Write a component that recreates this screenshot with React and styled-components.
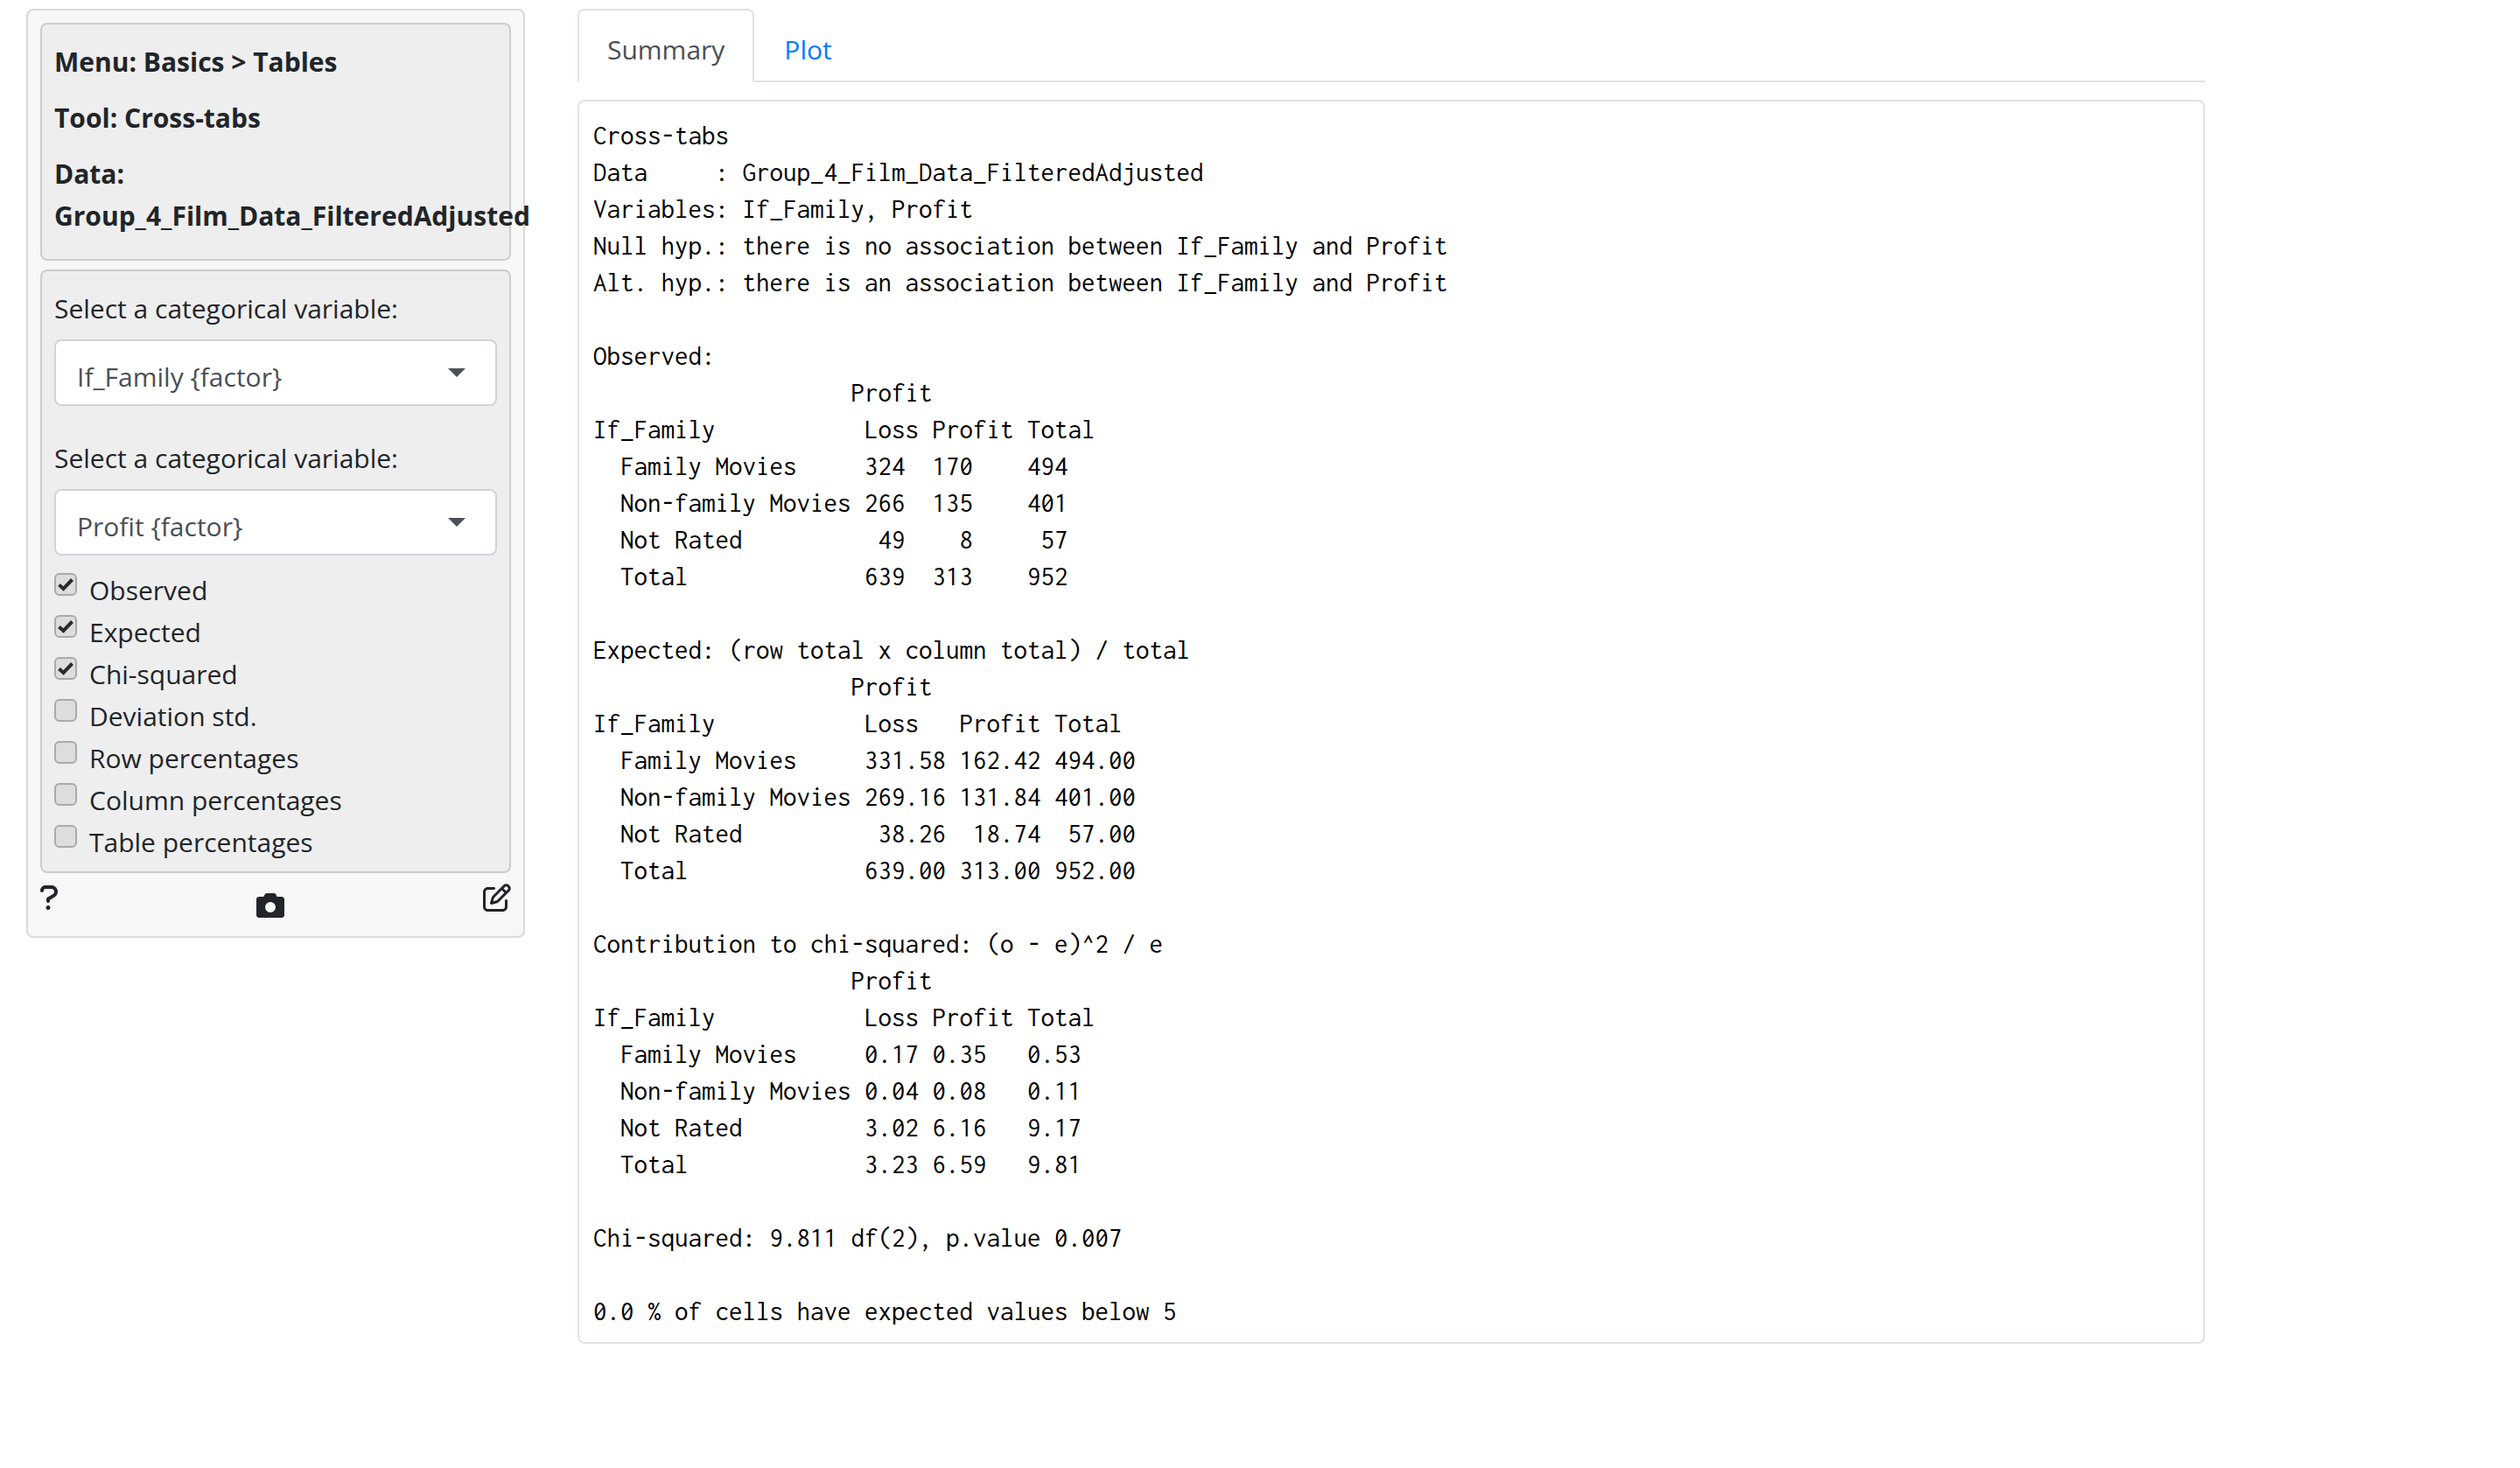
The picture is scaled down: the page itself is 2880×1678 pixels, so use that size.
import React, { useState } from "react";
import styled, { createGlobalStyle } from "styled-components";

const GlobalStyle = createGlobalStyle`
  *, *::before, *::after { box-sizing: border-box; }
  body {
    margin: 0;
    background: #fff;
    color: #212529;
    font-family: "Open Sans", "Noto Sans", sans-serif;
    font-size: 30px;
    line-height: 48px;
  }
  button, select, input { font: inherit; color: inherit; }
`;

const Page = styled.div`
  display: grid;
  grid-template-columns: minmax(0, 19fr) minmax(0, 62fr);
  align-items: start;
  gap: 60px;
  padding: 10px 12.5% 10px 30px;
`;

const Sidebar = styled.aside`
  display: flex;
  flex-direction: column;
  gap: 10px;
  padding: 14px;
  border: 2px solid #d9d9d9;
  border-radius: 8px;
  background: #f7f7f7;
`;

const Well = styled.section`
  padding: 19px 14px 9px;
  border: 2px solid #cdcdcd;
  border-radius: 8px;
  background: #eee;
`;

const InfoLine = styled.p`
  margin: 0 0 16px;
  font-weight: 700;
`;

const Field = styled.div`
  display: flex;
  flex-direction: column;
  gap: 11px;
  margin-bottom: ${(p) => (p.$last ? 16 : 36)}px;
`;

const SelectBox = styled.div`
  display: grid;
  grid-template-columns: 1fr auto;
  align-items: center;
`;

const Select = styled.select`
  grid-area: 1 / 1 / 2 / 3;
  appearance: none;
  width: 100%;
  height: 76px;
  padding: 10px 72px 0 24px;
  border: 2px solid #ced4da;
  border-radius: 8px;
  background: #fff;
  color: #495057;
`;

const Caret = styled.svg`
  grid-area: 1 / 2;
  width: 20px;
  height: 10px;
  margin-right: 36px;
  pointer-events: none;
  fill: #495057;
`;

const Options = styled.div`
  display: flex;
  flex-direction: column;
`;

const Option = styled.label`
  display: flex;
  gap: 14px;
`;

const CheckCell = styled.span`
  display: grid;
  width: 26px;
  height: 26px;
  margin-top: 4px;
`;

const Checkbox = styled.input`
  grid-area: 1 / 1;
  appearance: none;
  width: 26px;
  height: 26px;
  margin: 0;
  border: 2px solid #a9a9a9;
  border-radius: 6px;
  background: #ddd;
  & + svg { visibility: hidden; }
  &:checked + svg { visibility: visible; }
`;

const Tick = styled.svg`
  grid-area: 1 / 1;
  width: 26px;
  height: 26px;
  pointer-events: none;
  fill: none;
  stroke: #2a2a2a;
  stroke-width: 4;
`;

const Footer = styled.div`
  display: flex;
  justify-content: space-between;
  align-items: flex-start;
  height: 48px;
`;

const IconButton = styled.button`
  display: flex;
  margin: 0;
  padding: ${(p) => (p.$low ? 11 : 2)}px 0 0;
  border: 0;
  background: none;
  svg { height: 32px; width: auto; fill: #212529; }
`;

const Tabs = styled.div`
  display: flex;
  border-bottom: 2px solid #dee2e6;
`;

const Tab = styled.button`
  margin: 0 0 -2px;
  padding: 21px 32px 11px;
  border: 2px solid;
  border-color: ${(p) => (p.$active ? "#dee2e6 #dee2e6 #fff" : "transparent")};
  border-radius: 8px 8px 0 0;
  background: ${(p) => (p.$active ? "#fff" : "transparent")};
  color: ${(p) => (p.$active ? "#495057" : "#007bff")};
`;

const Output = styled.pre`
  margin: 20px 0 0;
  padding: 18px 16px 14px;
  border: 2px solid #dee2e6;
  border-radius: 8px;
  color: #000;
  font-family: Inconsolata, "Noto Sans Mono", "DejaVu Sans Mono", monospace;
  font-size: 31px;
  line-height: 42px;
`;

const CHECKS = [
  ["Observed", true],
  ["Expected", true],
  ["Chi-squared", true],
  ["Deviation std.", false],
  ["Row percentages", false],
  ["Column percentages", false],
  ["Table percentages", false],
];

const SUMMARY = `Cross-tabs
Data     : Group_4_Film_Data_FilteredAdjusted
Variables: If_Family, Profit
Null hyp.: there is no association between If_Family and Profit
Alt. hyp.: there is an association between If_Family and Profit

Observed:
                   Profit
If_Family           Loss Profit Total
  Family Movies     324  170    494
  Non-family Movies 266  135    401
  Not Rated          49    8     57
  Total             639  313    952

Expected: (row total x column total) / total
                   Profit
If_Family           Loss   Profit Total
  Family Movies     331.58 162.42 494.00
  Non-family Movies 269.16 131.84 401.00
  Not Rated          38.26  18.74  57.00
  Total             639.00 313.00 952.00

Contribution to chi-squared: (o - e)^2 / e
                   Profit
If_Family           Loss Profit Total
  Family Movies     0.17 0.35   0.53
  Non-family Movies 0.04 0.08   0.11
  Not Rated         3.02 6.16   9.17
  Total             3.23 6.59   9.81

Chi-squared: 9.811 df(2), p.value 0.007

0.0 % of cells have expected values below 5`;

function VariableSelect({ id, initial, last }) {
  const [value, setValue] = useState(initial);
  return (
    <Field $last={last}>
      <label htmlFor={id}>Select a categorical variable:</label>
      <SelectBox>
        <Select id={id} value={value} onChange={(e) => setValue(e.target.value)}>
          <option value={initial}>{initial}</option>
        </Select>
        <Caret viewBox="0 0 20 10" aria-hidden="true">
          <path d="M0 0h20L10 10z" />
        </Caret>
      </SelectBox>
    </Field>
  );
}

export default function App() {
  const [tab, setTab] = useState("Summary");
  return (
    <>
      <GlobalStyle />
      <Page>
        <Sidebar>
          <Well>
            <InfoLine>Menu: Basics &gt; Tables</InfoLine>
            <InfoLine>Tool: Cross-tabs</InfoLine>
            <InfoLine>Data: Group_4_Film_Data_FilteredAdjusted</InfoLine>
          </Well>
          <Well>
            <VariableSelect id="var1" initial="If_Family {factor}" />
            <VariableSelect id="var2" initial="Profit {factor}" last />
            <Options>
              {CHECKS.map(([name, on]) => (
                <Option key={name}>
                  <CheckCell>
                    <Checkbox type="checkbox" defaultChecked={on} />
                    <Tick viewBox="0 0 26 26" aria-hidden="true">
                      <path d="M5.5 13.5L10.5 18L20.5 7.5" />
                    </Tick>
                  </CheckCell>
                  {name}
                </Option>
              ))}
            </Options>
          </Well>
          <Footer>
            <IconButton type="button" aria-label="Help">
              <svg viewBox="0 0 320 512">
                <path d="M204.3 32H96C43.06 32 0 75.07 0 128c0 17.67 14.31 32 32 32s32-14.32 32-32c0-17.64 14.34-32 32-32h108.3C232.8 96 256 119.2 256 147.8c0 19.72-10.97 37.47-30.5 47.33L127.8 252.4C117.1 258.2 112 268.7 112 280v40c0 17.67 14.31 32 32 32s32-14.32 32-32V298.3L256 251.3c39.47-19.75 64-59.42 64-103.5C320 83.95 268.1 32 204.3 32zM144 400c-22.09 0-40 17.91-40 40s17.91 40 40 40s40-17.9 40-40S166.1 400 144 400z" />
              </svg>
            </IconButton>
            <IconButton type="button" aria-label="Screenshot" $low>
              <svg viewBox="0 0 512 512">
                <path
                  fillRule="evenodd"
                  d="M512 144v288c0 26.5-21.5 48-48 48H48c-26.5 0-48-21.5-48-48V144c0-26.5 21.5-48 48-48h88l12.3-32.9c7-18.7 24.9-31.1 44.9-31.1h125.5c20 0 37.9 12.4 44.9 31.1L376 96h88c26.5 0 48 21.5 48 48zM256 384a96 96 0 1 0 0-192 96 96 0 1 0 0 192z"
                />
              </svg>
            </IconButton>
            <IconButton type="button" aria-label="Report">
              <svg viewBox="0 0 512 512">
                <path d="M373.1 24.97C401.2-3.147 446.8-3.147 474.9 24.97L487 37.09C515.1 65.21 515.1 110.8 487 138.9L289.8 336.2C281.1 344.8 270.4 351.1 258.6 354.5L158.6 383.1C150.2 385.5 141.2 383.1 135 376.1C128.9 370.8 126.5 361.8 128.9 353.4L157.5 253.4C160.9 241.6 167.2 230.9 175.8 222.2L373.1 24.97zM440.1 58.91C431.6 49.54 416.4 49.54 407 58.91L377.9 88L424 134.1L453.1 104.1C462.5 95.6 462.5 80.4 453.1 71.03L440.1 58.91zM203.7 266.6L186.9 325.1L245.4 308.3C249.4 307.2 252.9 305.1 255.8 302.2L390.1 168L344 121.9L209.8 256.2C206.9 259.1 204.8 262.6 203.7 266.6zM200 64C213.3 64 224 74.75 224 88C224 101.3 213.3 112 200 112H88C65.91 112 48 129.9 48 152V424C48 446.1 65.91 464 88 464H360C382.1 464 400 446.1 400 424V312C400 298.7 410.7 288 424 288C437.3 288 448 298.7 448 312V424C448 472.6 408.6 512 360 512H88C39.4 512 0 472.6 0 424V152C0 103.4 39.4 64 88 64H200z" />
              </svg>
            </IconButton>
          </Footer>
        </Sidebar>
        <main>
          <Tabs role="tablist">
            {["Summary", "Plot"].map((t) => (
              <Tab key={t} type="button" role="tab" aria-selected={tab === t} $active={tab === t} onClick={() => setTab(t)}>
                {t}
              </Tab>
            ))}
          </Tabs>
          <Output>{SUMMARY}</Output>
        </main>
      </Page>
    </>
  );
}
